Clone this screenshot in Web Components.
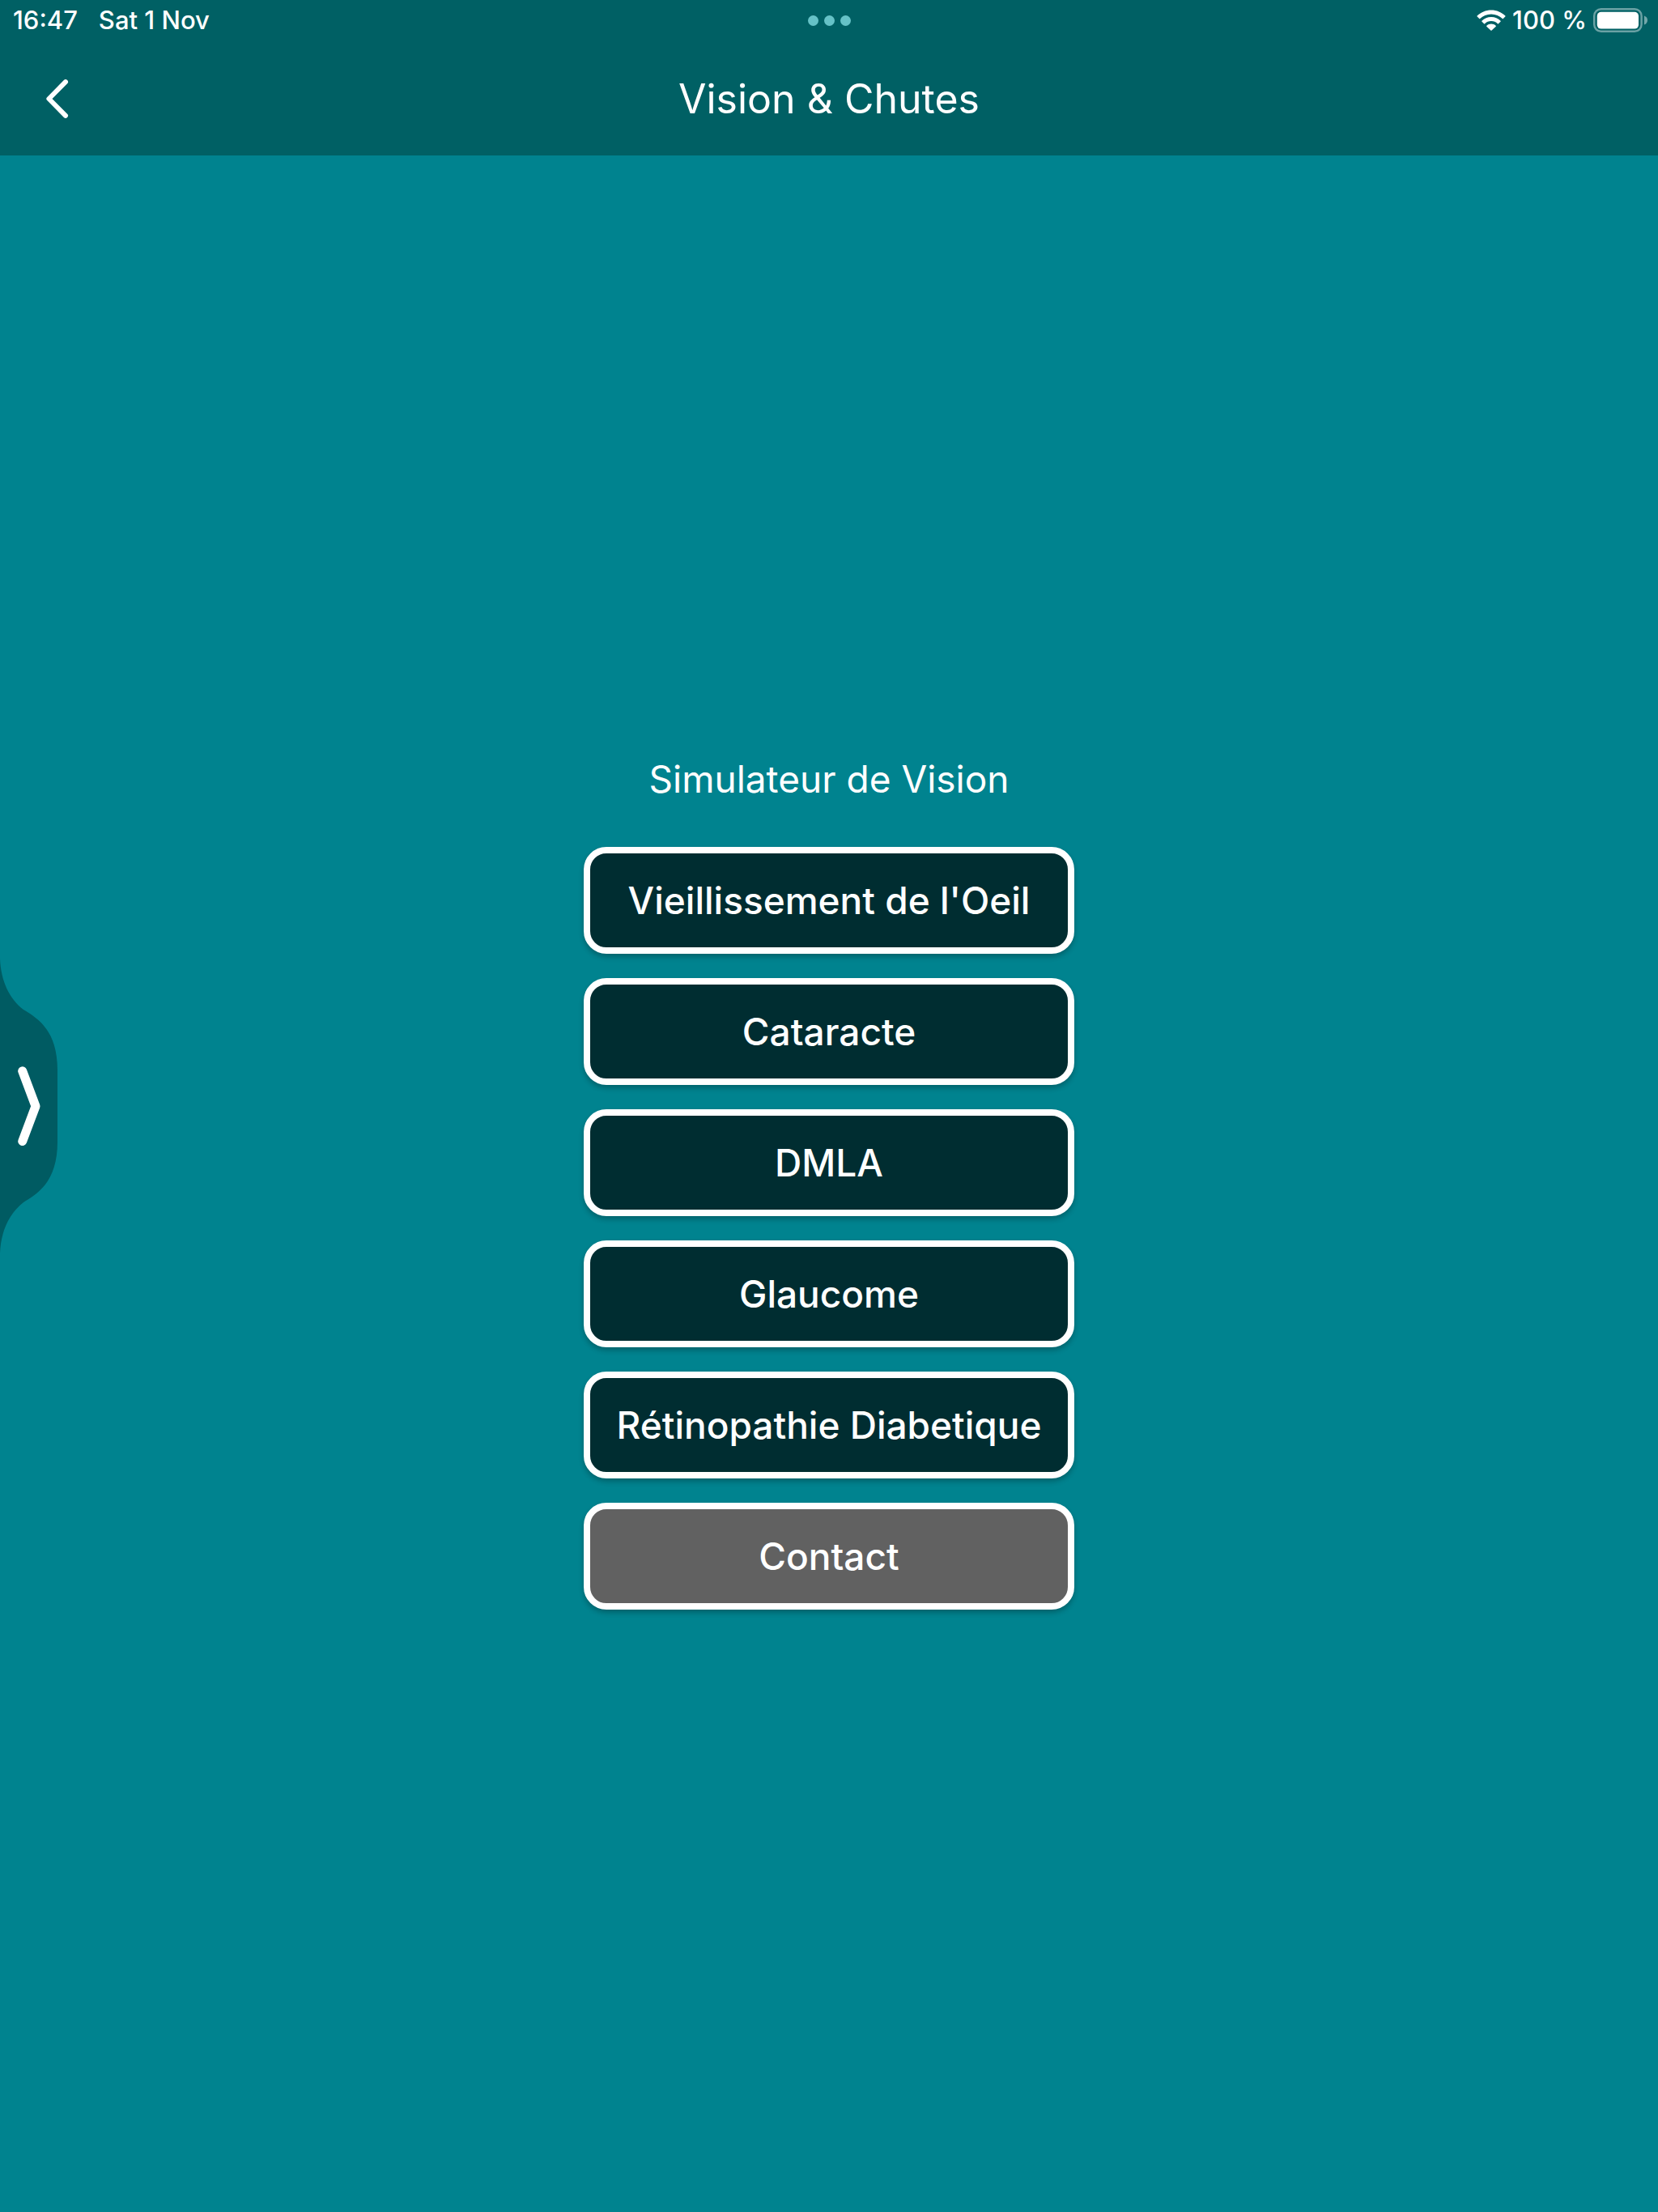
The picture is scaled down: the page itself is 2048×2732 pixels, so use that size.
<!DOCTYPE html>
<html lang="fr">
<head>
<meta charset="utf-8">
<meta name="viewport" content="width=device-width, initial-scale=1">
<title>Vision &amp; Chutes</title>
<style>
  html, body {
    margin: 0;
    height: 100%;
  }

  body {
    --dark-primary-color: #006064;
    --primary-color: #00838f;
    --drawer-color: #005b62;
    --button-color: #002d31;
    --primary-text-color: #fff;
    font-family: Inter, "Liberation Sans", sans-serif;
    color: var(--primary-text-color);
    background: var(--primary-color);
  }
</style>
</head>
<body>
<vision-shell></vision-shell>

<script>
customElements.define('status-bar', class extends HTMLElement {
  constructor() {
    super()
    this.attachShadow({mode: 'open'})
    this.shadowRoot.innerHTML = this.template
  }

  get template() {
    return `
    <style>
      :host {
        display: grid;
        grid-template-columns: 1fr auto 1fr;
        align-items: center;
        height: 50px;
        padding: 0 12px;
        box-sizing: border-box;
        font-size: 31px;
        font-weight: 500;
        line-height: 36px;
        white-space: nowrap;
      }
      .left, .right, .dots {
        display: flex;
        align-items: center;
      }
      .left {
        gap: 26px;
        padding-left: 4px;
      }
      .dots {
        gap: 7px;
      }
      .dots i {
        width: 13px;
        height: 13px;
        border-radius: 50%;
        background: #66c2c7;
      }
      .right {
        justify-content: flex-end;
        gap: 8px;
      }
      svg {
        display: block;
      }
    </style>

    <span class="left"><span>16:47</span><span>Sat 1 Nov</span></span>
    <span class="dots"><i></i><i></i><i></i></span>
    <span class="right">
      <svg width="36" height="26" viewBox="0 0 36 26" fill="#fff" aria-hidden="true">
        <path d="M18 0.5C24.8 0.5 31 3.2 35.4 7.6Q35.8 8.1 35.3 8.6L32.8 11.1Q32.3 11.5 31.8 11.1C28.2 7.6 23.4 5.5 18 5.5S7.8 7.6 4.2 11.1Q3.7 11.5 3.2 11.1L0.7 8.6Q0.2 8.1 0.6 7.6C5 3.2 11.2 0.5 18 0.5Z"/>
        <path d="M18 9C22.5 9 26.6 10.8 29.6 13.7Q30 14.2 29.5 14.7L26.9 17.2Q26.4 17.6 25.9 17.2C23.8 15.2 21.1 14 18 14S12.2 15.2 10.1 17.2Q9.6 17.6 9.1 17.2L6.5 14.7Q6 14.2 6.4 13.7C9.4 10.8 13.5 9 18 9Z"/>
        <path d="M18 17.4C20.3 17.4 22.2 18.3 23.7 19.7Q24.2 20.2 23.7 20.7L18.6 25.6Q18 26 17.4 25.6L12.3 20.7Q11.8 20.2 12.3 19.7C13.8 18.3 15.7 17.4 18 17.4Z"/>
      </svg>
      <span>100 %</span>
      <svg width="68" height="30" viewBox="0 0 68 30" aria-hidden="true">
        <rect x="1.2" y="1.2" width="58.4" height="27.6" rx="8.5" fill="none" stroke="#fff" stroke-opacity=".42" stroke-width="2.4"/>
        <rect x="4.8" y="4.8" width="51.2" height="20.8" rx="5" fill="#fff"/>
        <path d="M63 9.4C65.3 10.2 67 12.3 67 15S65.3 19.8 63 20.6Z" fill="#fff" fill-opacity=".45"/>
      </svg>
    </span>
    `
  }
})

customElements.define('app-toolbar', class extends HTMLElement {
  constructor() {
    super()
    this.attachShadow({mode: 'open'})
    this.shadowRoot.innerHTML = this.template
  }

  get template() {
    return `
    <style>
      :host {
        display: grid;
        grid-template-columns: 1fr auto 1fr;
        align-items: center;
        height: 142px;
        padding: 2px 24px 0;
        box-sizing: border-box;
      }
      button {
        display: flex;
        align-items: center;
        justify-content: center;
        width: 96px;
        height: 96px;
        padding: 0;
        border: 0;
        color: inherit;
        background: none;
      }
      h1 {
        margin: 0;
        font-size: 50px;
        font-weight: 400;
        line-height: 64px;
        white-space: nowrap;
      }
    </style>

    <button type="button" aria-label="Retour">
      <svg width="48" height="48" viewBox="0 0 48 48" fill="none" stroke="currentColor" stroke-width="6" stroke-linecap="round" stroke-linejoin="round">
        <path d="M33 3.2L12.4 24L33 44.8"/>
      </svg>
    </button>
    <h1><slot></slot></h1>
    `
  }
})

customElements.define('menu-button', class extends HTMLElement {
  constructor() {
    super()
    this.attachShadow({mode: 'open'})
    this.shadowRoot.innerHTML = this.template
  }

  get template() {
    return `
    <style>
      :host {
        display: block;
      }
      button {
        display: block;
        width: 100%;
        height: 132px;
        padding: 0 24px;
        box-sizing: border-box;
        border: 8px solid #fff;
        border-radius: 28px;
        color: inherit;
        background: var(--button-color);
        box-shadow: 0 4px 6px rgba(0, 0, 0, .24);
        font: inherit;
        font-size: 46px;
        font-weight: 500;
        line-height: 52px;
        white-space: nowrap;
      }
      :host([muted]) button {
        background: #616161;
      }
    </style>

    <button type="button"><slot></slot></button>
    `
  }
})

customElements.define('vision-menu', class extends HTMLElement {
  constructor() {
    super()
    this.attachShadow({mode: 'open'})
    this.shadowRoot.innerHTML = this.template
  }

  get template() {
    return `
    <style>
      :host {
        display: flex;
        flex-direction: column;
        align-items: center;
        justify-content: center;
        gap: 58px;
      }
      h2 {
        margin: 0;
        font-size: 46px;
        font-weight: 400;
        line-height: 52px;
      }
      nav {
        display: flex;
        flex-direction: column;
        gap: 30px;
        width: 100%;
        max-width: 606px;
      }
    </style>

    <h2>Simulateur de Vision</h2>
    <nav>
      <menu-button>Vieillissement de l'Oeil</menu-button>
      <menu-button>Cataracte</menu-button>
      <menu-button>DMLA</menu-button>
      <menu-button>Glaucome</menu-button>
      <menu-button>Rétinopathie Diabetique</menu-button>
      <menu-button muted>Contact</menu-button>
    </nav>
    `
  }
})

// pull handle of the side drawer, floats over the page
customElements.define('drawer-handle', class extends HTMLElement {
  constructor() {
    super()
    this.attachShadow({mode: 'open'})
    this.shadowRoot.innerHTML = this.template
  }

  get template() {
    return `
    <style>
      :host {
        position: absolute;
        left: 0;
        top: 50%;
        transform: translateY(-50%);
      }
      button {
        display: block;
        padding: 0;
        border: 0;
        color: inherit;
        background: none;
      }
      svg {
        display: block;
      }
      .shape {
        fill: var(--drawer-color);
      }
    </style>

    <button type="button" aria-label="Ouvrir le menu">
      <svg width="72" height="364" viewBox="0 0 72 364">
        <path class="shape" d="M0 0C1 28 12 50 29 63C45 73 71 87 71 138V226C71 277 45 291 29 301C12 314 1 336 0 364Z"/>
        <path d="M27.7 138.8L44 182.2L27.7 225.6" fill="none" stroke="currentColor" stroke-width="11" stroke-linecap="round" stroke-linejoin="round"/>
      </svg>
    </button>
    `
  }
})

customElements.define('vision-shell', class extends HTMLElement {
  constructor() {
    super()
    this.attachShadow({mode: 'open'})
    this.shadowRoot.innerHTML = this.template
  }

  get template() {
    return `
    <style>
      :host {
        position: relative;
        display: flex;
        flex-direction: column;
        min-height: 100%;
      }
      header {
        background: var(--dark-primary-color);
      }
      main {
        display: flex;
        flex: 1;
      }
      vision-menu {
        flex: 1;
      }
    </style>

    <header>
      <status-bar></status-bar>
      <app-toolbar>Vision &amp; Chutes</app-toolbar>
    </header>
    <main>
      <vision-menu></vision-menu>
    </main>
    <drawer-handle></drawer-handle>
    `
  }
})
</script>
</body>
</html>
